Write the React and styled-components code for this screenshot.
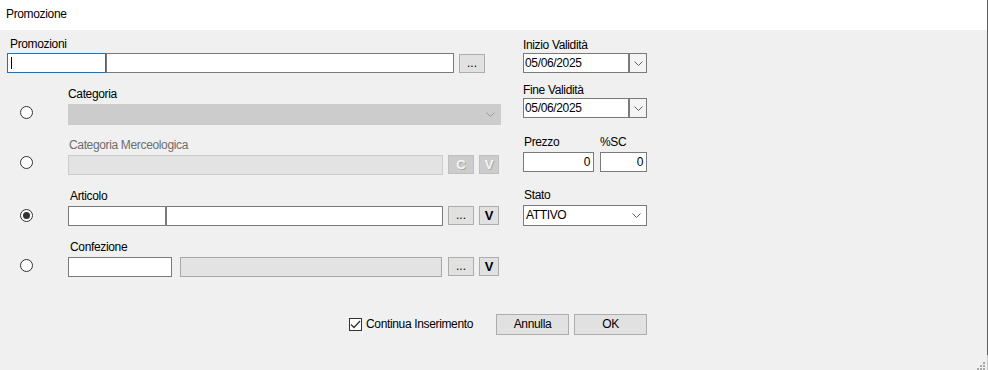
import React from "react";
import styled, { createGlobalStyle } from "styled-components";

const GlobalStyle = createGlobalStyle`
  html, body { margin: 0; padding: 0; background: #f0f0f0; }
  body {
    font-family: "Liberation Sans", Arial, sans-serif;
    font-size: 12px;
    letter-spacing: -0.35px;
    color: #000;
  }
  * { box-sizing: border-box; }
`;

const Window = styled.div`
  display: flex;
  width: 988px;
  height: 370px;
  overflow: hidden;
`;

const Main = styled.div`
  position: relative;
  display: flex;
  flex-direction: column;
  width: 987px;
  height: 370px;
`;

const EdgeStrip = styled.div`
  width: 1px;
  height: 370px;
  background: linear-gradient(#5f5f5f 0 355px, #c8c8c8 355px);
`;

const TitleBar = styled.div`
  height: 30px;
  line-height: 29px;
  background: #ffffff;
  padding-left: 6px;
`;

const Body = styled.div`
  flex: 1;
  display: flex;
  flex-direction: column;
  background: #f0f0f0;
  padding-left: 7px;
`;

const TopArea = styled.div`
  display: flex;
`;

const LeftCol = styled.div`
  width: 516px;
  display: flex;
  flex-direction: column;
  padding-top: 6px;
`;

const RightCol = styled.div`
  width: 125px;
  display: flex;
  flex-direction: column;
  padding-top: 7px;
`;

const Label = styled.div`
  height: 15px;
  line-height: 17px;
  white-space: nowrap;
  margin-left: ${(p) => p.$indent || 0}px;
  margin-top: ${(p) => p.$mt || 0}px;
  color: ${(p) => (p.$disabled ? "#6d6d6d" : "#000")};
`;

const ControlRow = styled.div`
  display: flex;
  align-items: flex-start;
  margin-top: ${(p) => p.$mt || 0}px;
`;

const TextBox = styled.div`
  position: relative;
  flex: none;
  width: ${(p) => p.$w}px;
  height: ${(p) => p.$h || 20}px;
  margin-left: ${(p) => p.$ml || 0}px;
  border: 1px solid
    ${(p) =>
      p.$focus ? "#0078d7" : p.$disabled ? "#cccccc" : p.$readonly ? "#a8a8a8" : "#7a7a7a"};
  background: ${(p) => (p.$disabled || p.$readonly ? "#e3e3e3" : "#ffffff")};
  display: flex;
  align-items: center;
  justify-content: ${(p) => (p.$right ? "flex-end" : "flex-start")};
  padding: 0 3px 0 1px;
  white-space: nowrap;
  line-height: 15px;
`;

const Caret = styled.span`
  display: block;
  width: 1px;
  height: 12px;
  margin-left: 2px;
  background: #000;
`;

const SmallButton = styled.div`
  flex: none;
  width: ${(p) => p.$w}px;
  height: 19px;
  margin-left: ${(p) => p.$ml || 5}px;
  margin-top: ${(p) => p.$mt || 0}px;
  border: 1px solid ${(p) => (p.$disabled ? "#bfbfbf" : "#adadad")};
  background: ${(p) => (p.$disabled ? "#cccccc" : "#e1e1e1")};
  display: flex;
  align-items: ${(p) => (p.$dots ? "flex-end" : "center")};
  justify-content: center;
  padding-bottom: ${(p) => (p.$dots ? 3 : 0)}px;
  font-weight: ${(p) => (p.$bold ? 700 : 400)};
  font-size: ${(p) => (p.$bold ? 13 : 12)}px;
  line-height: 12px;
  letter-spacing: 0;
  color: ${(p) => (p.$disabled ? "#f6f6f6" : "#000")};
  text-shadow: ${(p) => (p.$disabled ? "1px 1px 0 #a9a9a9" : "none")};
`;

const ComboBox = styled.div`
  flex: none;
  width: ${(p) => p.$w}px;
  height: 21px;
  border: 1px solid ${(p) => (p.$disabled ? "#cccccc" : "#7a7a7a")};
  background: ${(p) => (p.$disabled ? "#cccccc" : "#ffffff")};
  display: flex;
  align-items: center;
  justify-content: space-between;
  padding: 0 5px 0 2px;
  line-height: 15px;
`;

const ComboText = styled.span`
  color: #000;
`;

const DatePicker = styled.div`
  display: flex;
  width: 124px;
  height: 20px;
  margin-top: 1px;
  border: 1px solid #7a7a7a;
  background: #ffffff;
`;

const DateText = styled.div`
  flex: 1;
  display: flex;
  align-items: center;
  padding-left: 1px;
  line-height: 15px;
`;

const DropButton = styled.div`
  width: 18px;
  border-left: 2px solid #7a7a7a;
  background: #f4f4f4;
  display: flex;
  align-items: center;
  justify-content: center;
`;

const OptionList = styled.div`
  display: flex;
  flex-direction: column;
  margin-top: 13px;
`;

const OptionRow = styled.div`
  display: grid;
  grid-template-columns: 61px 1fr;
  grid-template-rows: 15px auto;
  row-gap: 3px;
  height: 51px;
`;

const RadioCell = styled.div`
  grid-column: 1;
  grid-row: 2;
  padding-left: 13px;
  padding-top: ${(p) => p.$dy}px;
`;

const Radio = styled.div`
  width: 13px;
  height: 13px;
  border-radius: 50%;
  border: 1px solid #333333;
  background: #ffffff;
  display: flex;
  align-items: center;
  justify-content: center;
  &::after {
    content: "";
    display: ${(p) => (p.$checked ? "block" : "none")};
    width: 7px;
    height: 7px;
    border-radius: 50%;
    background: #333333;
  }
`;

const FieldLabel = styled(Label)`
  grid-column: 2;
  grid-row: 1;
`;

const FieldControls = styled.div`
  grid-column: 2;
  grid-row: 2;
  display: flex;
  align-items: flex-start;
`;

const PriceGrid = styled.div`
  display: grid;
  grid-template-columns: 71px 47px;
  grid-template-rows: 15px 20px;
  column-gap: 6px;
  row-gap: 3px;
  margin-top: 16px;
`;

const Footer = styled.div`
  display: flex;
  align-items: center;
  margin-top: 24px;
  padding-left: 342px;
`;

const CheckGroup = styled.div`
  width: 147px;
  display: flex;
  align-items: center;
  gap: 4px;
  line-height: 15px;
`;

const CheckBox = styled.div`
  width: 13px;
  height: 13px;
  border: 1px solid #333333;
  background: #ffffff;
  display: flex;
  align-items: center;
  justify-content: center;
`;

const DialogButton = styled.div`
  width: 73px;
  height: 21px;
  margin-left: ${(p) => p.$ml || 0}px;
  border: 1px solid #adadad;
  background: #e1e1e1;
  display: flex;
  align-items: center;
  justify-content: center;
  line-height: 15px;
`;

const Grip = styled.svg`
  position: absolute;
  right: 2px;
  bottom: 0;
`;

const Chevron = ({ color = "#606060" }) => (
  <svg width="9" height="5" viewBox="0 0 9 5">
    <path d="M0.5 0.5 L4.5 4.5 L8.5 0.5" fill="none" stroke={color} strokeWidth="1" />
  </svg>
);

export default function App() {
  return (
    <>
      <GlobalStyle />
      <Window>
        <Main>
          <TitleBar>Promozione</TitleBar>
          <Body>
            <TopArea>
              <LeftCol>
                <Label $indent={3}>Promozioni</Label>
                <ControlRow $mt={2}>
                  <TextBox $w={99} $focus>
                    <Caret />
                  </TextBox>
                  <TextBox $w={348} />
                  <SmallButton $w={26} $ml={5} $mt={1} $dots>
                    ...
                  </SmallButton>
                </ControlRow>

                <OptionList>
                  <OptionRow>
                    <RadioCell $dy={2}>
                      <Radio />
                    </RadioCell>
                    <FieldLabel>Categoria</FieldLabel>
                    <FieldControls>
                      <ComboBox $w={433} $disabled>
                        <span />
                        <Chevron color="#9a9a9a" />
                      </ComboBox>
                    </FieldControls>
                  </OptionRow>

                  <OptionRow>
                    <RadioCell $dy={1}>
                      <Radio />
                    </RadioCell>
                    <FieldLabel $disabled $indent={1}>
                      Categoria Merceologica
                    </FieldLabel>
                    <FieldControls>
                      <TextBox $w={375} $disabled />
                      <SmallButton $w={26} $ml={5} $bold $disabled>
                        C
                      </SmallButton>
                      <SmallButton $w={20} $ml={5} $bold $disabled>
                        V
                      </SmallButton>
                    </FieldControls>
                  </OptionRow>

                  <OptionRow>
                    <RadioCell $dy={3}>
                      <Radio $checked />
                    </RadioCell>
                    <FieldLabel $indent={2}>Articolo</FieldLabel>
                    <FieldControls>
                      <TextBox $w={98} />
                      <TextBox $w={277} />
                      <SmallButton $w={26} $ml={5} $dots>
                        ...
                      </SmallButton>
                      <SmallButton $w={20} $ml={5} $bold>
                        V
                      </SmallButton>
                    </FieldControls>
                  </OptionRow>

                  <OptionRow>
                    <RadioCell $dy={2}>
                      <Radio />
                    </RadioCell>
                    <FieldLabel $indent={2}>Confezione</FieldLabel>
                    <FieldControls>
                      <TextBox $w={104} />
                      <TextBox $w={262} $ml={8} $readonly />
                      <SmallButton $w={26} $ml={6} $dots>
                        ...
                      </SmallButton>
                      <SmallButton $w={20} $ml={5} $bold>
                        V
                      </SmallButton>
                    </FieldControls>
                  </OptionRow>
                </OptionList>
              </LeftCol>

              <RightCol>
                <Label>Inizio Validità</Label>
                <DatePicker>
                  <DateText>05/06/2025</DateText>
                  <DropButton>
                    <Chevron />
                  </DropButton>
                </DatePicker>

                <Label $mt={9}>Fine Validità</Label>
                <DatePicker>
                  <DateText>05/06/2025</DateText>
                  <DropButton>
                    <Chevron />
                  </DropButton>
                </DatePicker>

                <PriceGrid>
                  <Label $indent={1}>Prezzo</Label>
                  <Label>%SC</Label>
                  <TextBox $w={71} $right>
                    0
                  </TextBox>
                  <TextBox $w={47} $right>
                    0
                  </TextBox>
                </PriceGrid>

                <Label $mt={15} $indent={1}>
                  Stato
                </Label>
                <ControlRow $mt={3}>
                  <ComboBox $w={124}>
                    <ComboText>ATTIVO</ComboText>
                    <Chevron />
                  </ComboBox>
                </ControlRow>
              </RightCol>
            </TopArea>

            <Footer>
              <CheckGroup>
                <CheckBox>
                  <svg width="11" height="9" viewBox="0 0 11 9">
                    <path d="M1 4.5 L4 7.5 L10 1" fill="none" stroke="#333" strokeWidth="1.3" />
                  </svg>
                </CheckBox>
                <span>Continua Inserimento</span>
              </CheckGroup>
              <DialogButton>Annulla</DialogButton>
              <DialogButton $ml={5}>OK</DialogButton>
            </Footer>
          </Body>
          <Grip width="8" height="8" viewBox="0 0 8 8">
            <rect x="6" y="0" width="2" height="2" fill="#a8a8a8" />
            <rect x="3" y="3" width="2" height="2" fill="#a8a8a8" />
            <rect x="6" y="3" width="2" height="2" fill="#a8a8a8" />
            <rect x="0" y="6" width="2" height="2" fill="#a8a8a8" />
            <rect x="3" y="6" width="2" height="2" fill="#a8a8a8" />
            <rect x="6" y="6" width="2" height="2" fill="#a8a8a8" />
          </Grip>
        </Main>
        <EdgeStrip />
      </Window>
    </>
  );
}
